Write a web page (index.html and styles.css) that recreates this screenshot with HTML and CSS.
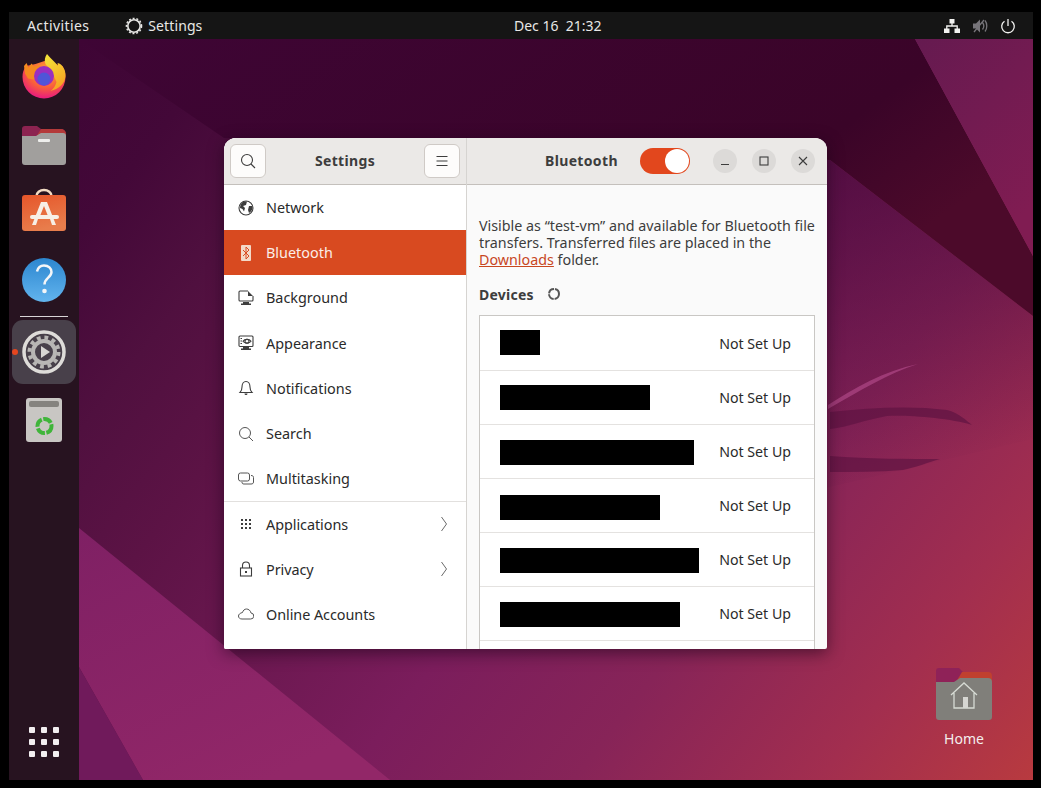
FILE: index.html
```html
<!DOCTYPE html>
<html lang="en">
<head>
<meta charset="utf-8">
<title>Settings - Bluetooth</title>
<link rel="stylesheet" href="styles.css">
</head>
<body>
<div class="screen">
  <header class="topbar">
    <div class="topbar-left">
      <span class="top-item activities">Activities</span>
      <span class="top-item app-menu">
        <svg class="app-gear" viewBox="0 0 18 18"><circle cx="9" cy="9" r="6.2"/><circle class="dash" cx="9" cy="9" r="7.6"/></svg>
        Settings
      </span>
    </div>
    <div class="clock">Dec 16&nbsp;&nbsp;21:32</div>
    <div class="tray">
      <svg class="tray-icon" viewBox="0 0 16 16"><path class="fill-w" d="M5.5 1h5v4.500h-5zM0 10.500h5.500V15H0zM10.500 10.500H16V15h-5.500z"/><path class="line-w" d="M8 5v3M2.800 11V8h10.400v3"/></svg>
      <svg class="tray-icon" viewBox="0 0 16 16"><path class="fill-g" d="M1 5.500h3L8 1.500v13l-4-4H1z"/><path class="line-g" d="M10.500 4.500c1.500 2 1.500 5 0 7M13 2.500c2.400 3 2.400 8 0 11M2 14L12 2"/></svg>
      <svg class="tray-icon" viewBox="0 0 16 16"><path class="line-w" d="M8 1v7M4.500 3.200a6.300 6.300 0 1 0 7 0"/></svg>
    </div>
  </header>

  <div class="workspace">
    <nav class="dock">
      <div class="slot">
        <svg class="dock-icon" viewBox="0 0 48 48">
          <defs>
            <radialGradient id="ffBody" cx="0.55" cy="0.3" r="0.8"><stop offset="0" stop-color="#ffb52e"/><stop offset="0.5" stop-color="#f9603a"/><stop offset="0.85" stop-color="#ea1f7a"/><stop offset="1" stop-color="#e01a90"/></radialGradient>
            <linearGradient id="ffFlame" x1="0" y1="0" x2="0.4" y2="1"><stop offset="0" stop-color="#f4e73a"/><stop offset="1" stop-color="#f6a623"/></linearGradient>
          </defs>
          <path fill="url(#ffBody)" d="M6 14c-2.500 3.500-3.500 7-3.500 11a21.500 21.500 0 0 0 43 0c0-4-1-7.500-3-11l-18-5-9 3z"/>
          <path fill="url(#ffFlame)" d="M27 2c-2 3-3 6-1.500 10l7 9 4 9c-1 4-3 7-6 9 8-2 14.500-7 15-15 .3-6-3-12-8-13 .5 1 .5 2 .5 3-2.500-4-7-7-11-12z"/>
          <path fill="#f58a1f" d="M4 14l2.500-3 2 4.500 3-4 2.500 3 5-1 3 3-5 5-3 6-6-1-3-5z"/>
          <circle cx="24" cy="24" r="10" fill="#9a2fc0"/>
          <circle cx="24" cy="27" r="6.500" fill="#4f55d8"/>
        </svg>
      </div>
      <div class="slot">
        <svg class="dock-icon" viewBox="0 0 48 48">
          <path fill="#8c2350" d="M2 9a3 3 0 0 1 3-3h12l4 3h20a5 5 0 0 1 5 5v8H2z"/>
          <path fill="#b43a3a" d="M21 9h20a5 5 0 0 1 5 5v3H16z"/>
          <path fill="#a19f9d" d="M2 16h14l5-3h22a3 3 0 0 1 3 3v26a3 3 0 0 1-3 3H5a3 3 0 0 1-3-3z"/>
          <rect x="18" y="19" width="12" height="3" rx="1" fill="#eeeeec"/>
        </svg>
      </div>
      <div class="slot">
        <svg class="dock-icon" viewBox="0 0 48 48">
          <defs><linearGradient id="shopBag" x1="0" y1="0" x2="0.3" y2="1"><stop offset="0" stop-color="#e6562a"/><stop offset="1" stop-color="#e87d4c"/></linearGradient></defs>
          <path fill="none" stroke="#f3dcc4" stroke-width="2.500" d="M16.500 8a7.500 6 0 0 1 15 0"/>
          <rect x="2" y="7" width="44" height="36" rx="3" fill="url(#shopBag)"/>
          <path fill="#f7efe6" d="M21 14h6l9 23h-4l-2-6H18l-2 6h-4zM24 18l-4 10h8z"/>
          <rect x="10" y="27" width="29" height="4" rx="2" fill="#f7efe6"/>
        </svg>
      </div>
      <div class="slot">
        <svg class="dock-icon" viewBox="0 0 48 48">
          <defs><linearGradient id="helpBall" x1="0" y1="0" x2="0" y2="1"><stop offset="0" stop-color="#2c86cf"/><stop offset="1" stop-color="#62b4ee"/></linearGradient></defs>
          <circle cx="24" cy="24" r="22" fill="url(#helpBall)"/>
          <path fill="none" stroke="#f4f6f8" stroke-width="2.500" d="M17 15.500c1-4 3.800-6 7-6 4.500 0 7.500 3 7.500 6.500 0 5.500-7 6-7 12.500"/>
          <circle cx="24.500" cy="35" r="2.300" fill="#f4f6f8"/>
        </svg>
      </div>
      <div class="dock-divider"></div>
      <div class="tile">
        <span class="running-dot"></span>
        <svg class="dock-icon" viewBox="0 0 48 48">
          <circle cx="24" cy="24" r="20" fill="none" stroke="#dedcd9" stroke-width="3.500"/>
          <circle cx="24" cy="24" r="11" fill="none" stroke="#b8b6b4" stroke-width="4"/>
          <circle cx="24" cy="24" r="14.500" fill="none" stroke="#b8b6b4" stroke-width="4" stroke-dasharray="3.800 3.790"/>
          <path fill="#d8d6d3" d="M21 18l9 6-9 6z"/>
        </svg>
      </div>
      <div class="slot">
        <svg class="dock-icon" viewBox="0 0 48 48">
          <rect x="6" y="2" width="36" height="44" rx="3" fill="#c8c6c3"/>
          <rect x="9" y="5" width="30" height="6" rx="2" fill="#85837f"/>
          <circle cx="24.500" cy="30" r="7" fill="none" stroke="#3fb53a" stroke-width="4" stroke-dasharray="9 1.500"/>
        </svg>
      </div>
      <div class="show-apps">
        <i></i><i></i><i></i><i></i><i></i><i></i><i></i><i></i><i></i>
      </div>
    </nav>

    <main class="desktop">
      <svg class="wallpaper" viewBox="0 0 954 741" preserveAspectRatio="none">
        <defs>
          <linearGradient id="wpBase" gradientUnits="userSpaceOnUse" x1="0" y1="0" x2="954" y2="741">
            <stop offset="0" stop-color="#3e0535"/><stop offset="0.1" stop-color="#430838"/><stop offset="0.2" stop-color="#50103f"/><stop offset="0.3" stop-color="#5c1345"/><stop offset="0.55" stop-color="#7b1d5c"/><stop offset="0.7" stop-color="#872458"/><stop offset="0.86" stop-color="#a22e4f"/><stop offset="1" stop-color="#b83a3f"/>
          </linearGradient>
          <linearGradient id="wpBand" x1="0" y1="0" x2="1" y2="0.4"><stop offset="0" stop-color="#3e0535"/><stop offset="0.8" stop-color="#3a0428"/><stop offset="1" stop-color="#4c0a2a"/></linearGradient>
          <linearGradient id="wpFacet" x1="0" y1="0" x2="0.6" y2="1"><stop offset="0" stop-color="#651a50"/><stop offset="1" stop-color="#801c52"/></linearGradient>
          <linearGradient id="wpWedge" x1="0" y1="0" x2="0.6" y2="1"><stop offset="0" stop-color="#7f2064"/><stop offset="1" stop-color="#922768"/></linearGradient>
          <linearGradient id="wpShade" x1="0.2" y1="0" x2="0.5" y2="1"><stop offset="0" stop-color="#3e0535" stop-opacity="0.7"/><stop offset="1" stop-color="#3e0535" stop-opacity="0"/></linearGradient>
        </defs>
        <rect width="954" height="741" fill="url(#wpBase)"/>
        <polygon fill="url(#wpShade)" points="751,121 954,277 954,400 700,460 600,121"/>
        <polygon fill="url(#wpBand)" points="0,0 836,0 954,217 954,277 751,121 145,99"/>
        <polygon fill="url(#wpFacet)" points="836,0 954,0 954,217"/>
        <polygon fill="url(#wpWedge)" points="0,489 311,741 64,741 0,628"/>
        <polygon fill="#701a5b" points="0,628 64,741 0,741"/>
        <path class="wisp-light" d="M749 366C775 349 805 332 839 325 810 334 780 352 749 370z"/>
        <path class="wisp-dark" d="M751 373C790 369 830 366 868 371 880 374 888 382 893 386 870 379 830 376 808 377 785 381 770 388 751 390z"/>
        <path class="wisp-dark" d="M751 417C790 420 830 420 861 420 850 423 835 429 824 431 800 433 775 433 751 433z"/>
      </svg>

      <section class="window">
        <aside class="sidebar">
          <div class="sidebar-head">
            <button class="head-btn" type="button">
              <svg class="sym" viewBox="0 0 16 16"><circle cx="7" cy="7" r="5.500"/><path d="M11 11l4 4"/></svg>
            </button>
            <span class="head-title">Settings</span>
            <button class="head-btn" type="button">
              <svg class="sym" viewBox="0 0 16 16"><path d="M2.500 3.500h11M2.500 8h11M2.500 12.500h11"/></svg>
            </button>
          </div>
          <ul class="nav-list">
            <li class="nav-row">
              <svg class="sym" viewBox="0 0 16 16"><circle cx="8" cy="8" r="7"/><path class="solid" d="M6 1.500C3 3 2 5 2 8l2.500 1 1.500 2.500 1-3.500L5 6l3-1 1-3.500zM11 6l3.500 0c.5 3-1 5.500-3.500 7l-1-3z"/></svg>
              <span>Network</span>
            </li>
            <li class="nav-row active">
              <svg class="sym" viewBox="0 0 16 16"><rect class="bt-bg" x="3" y="0" width="10" height="16" rx="1"/><path class="bt-mark" d="M5 5l6 6-3 3V2l3 3-6 6"/></svg>
              <span>Bluetooth</span>
            </li>
            <li class="nav-row">
              <svg class="sym" viewBox="0 0 16 16"><path d="M10 1H2a1 1 0 0 0-1 1v8a1 1 0 0 0 1 1h12a1 1 0 0 0 1-1V6"/><path class="solid" d="M10 1l5 5h-5zM5 12h6v1.500h2V15H3v-1.500h2z"/></svg>
              <span>Background</span>
            </li>
            <li class="nav-row">
              <svg class="sym" viewBox="0 0 16 16"><rect x="1" y="1" width="14" height="10.500" rx="1"/><circle cx="9" cy="6.200" r="2"/><path d="M5 6.200C6.500 3.800 11.500 3.800 13 6.200 11.500 8.600 6.500 8.600 5 6.200zM2.500 3.500h1.500M2.500 6h1.500M2.500 8.500h1.500"/><path class="solid" d="M5 12h6v1.500h2V15H3v-1.500h2z"/></svg>
              <span>Appearance</span>
            </li>
            <li class="nav-row">
              <svg class="sym" viewBox="0 0 16 16"><path d="M2 12.500h12c-1.500-1.500-2-2.500-2-5.500 0-3-1.500-5.500-4-5.500S4 4 4 7c0 3-.5 4-2 5.500z"/><path class="solid" d="M6.500 13.500h3c0 2-3 2-3 0z"/></svg>
              <span>Notifications</span>
            </li>
            <li class="nav-row">
              <svg class="sym thin" viewBox="0 0 16 16"><circle cx="7" cy="7" r="5.500"/><path d="M11 11l4 4"/></svg>
              <span>Search</span>
            </li>
            <li class="nav-row">
              <svg class="sym thin" viewBox="0 0 16 16"><rect x="0.500" y="2" width="11" height="8" rx="2"/><path d="M13 4.500c1.500 0 2.500.5 2.500 2V11c0 1.500-1 2-2.500 2H6c-1.500 0-2-.5-2-2"/></svg>
              <span>Multitasking</span>
            </li>
            <li class="nav-sep" role="separator"></li>
            <li class="nav-row lower">
              <svg class="sym" viewBox="0 0 16 16"><path class="solid" d="M3 3h2v2H3zM7 3h2v2H7zM11 3h2v2h-2zM3 7h2v2H3zM7 7h2v2H7zM11 7h2v2h-2zM3 11h2v2H3zM7 11h2v2H7zM11 11h2v2h-2z"/></svg>
              <span>Applications</span>
              <svg class="chevron" viewBox="0 0 8 16"><path d="M1.500 1l5 7-5 7"/></svg>
            </li>
            <li class="nav-row lower">
              <svg class="sym" viewBox="0 0 16 16"><path d="M4.500 7V4.500a3.500 3.500 0 0 1 7 0V7"/><rect x="2.500" y="7" width="11" height="8"/><rect class="solid" x="7" y="10" width="2" height="2"/></svg>
              <span>Privacy</span>
              <svg class="chevron" viewBox="0 0 8 16"><path d="M1.500 1l5 7-5 7"/></svg>
            </li>
            <li class="nav-row lower">
              <svg class="sym thin" viewBox="0 0 16 16"><path d="M4 13h8.500a3 3 0 0 0 .5-6C12.500 4.500 10.500 3 8.500 3 6.500 3 5 4.500 4.500 6.500 2 7 .5 8.500.5 10c0 2 1.500 3 3.500 3z"/></svg>
              <span>Online Accounts</span>
            </li>
          </ul>
        </aside>

        <div class="panel">
          <div class="panel-head">
            <span class="head-title bt-title">Bluetooth</span>
            <span class="switch"><span class="knob"></span></span>
            <div class="win-controls">
              <span class="win-btn"><svg class="sym small" viewBox="0 0 12 12"><path d="M2 9.500h8"/></svg></span>
              <span class="win-btn"><svg class="sym small" viewBox="0 0 12 12"><rect x="2" y="2" width="8" height="8"/></svg></span>
              <span class="win-btn"><svg class="sym small" viewBox="0 0 12 12"><path d="M2 2l8 8M10 2l-8 8"/></svg></span>
            </div>
          </div>
          <div class="panel-body">
            <p class="intro">Visible as “test-vm” and available for Bluetooth file transfers. Transferred files are placed in the <a class="link" href="#">Downloads</a> folder.</p>
            <div class="devices-head">
              <span>Devices</span>
              <svg class="spinner" viewBox="0 0 14 14"><circle cx="7" cy="7" r="5"/></svg>
            </div>
            <ul class="device-list">
              <li class="device"><span class="redact r1"></span><span class="status">Not Set Up</span></li>
              <li class="device"><span class="redact r2"></span><span class="status">Not Set Up</span></li>
              <li class="device"><span class="redact r3"></span><span class="status">Not Set Up</span></li>
              <li class="device"><span class="redact r4"></span><span class="status">Not Set Up</span></li>
              <li class="device"><span class="redact r5"></span><span class="status">Not Set Up</span></li>
              <li class="device"><span class="redact r6"></span><span class="status">Not Set Up</span></li>
              <li class="device"></li>
            </ul>
          </div>
        </div>
      </section>

      <div class="home-icon">
        <svg class="home-folder" viewBox="0 0 56 52">
          <path fill="#8f2258" d="M0 3a3 3 0 0 1 3-3h20l5 5h24a4 4 0 0 1 4 4v10H0z"/>
          <path fill="#c0402f" d="M26 4h26a4 4 0 0 1 4 4v6H20z"/>
          <path fill="#807f7a" d="M0 14h18l6-4 h28a4 4 0 0 1 4 4v35a3 3 0 0 1-3 3H3a3 3 0 0 1-3-3z"/>
          <path fill="none" stroke="#d6dbd4" stroke-width="1.300" d="M15 27l13-12 13 12M18 25v15h20V25"/>
          <rect x="27" y="29" width="5" height="11" fill="#d6d6d2"/>
        </svg>
        <span class="home-label">Home</span>
      </div>
    </main>
  </div>
</div>
</body>
</html>
```

FILE: styles.css
```css
* { box-sizing: border-box; }

html, body {
  margin: 0;
  height: 100%;
  background: #000;
  overflow: hidden;
}

body {
  font-family: "Noto Sans", "Open Sans", sans-serif;
  font-size: 14px;
  color: #2e2e2e;
}

ul {
  list-style: none;
  margin: 0;
  padding: 0;
}

.screen {
  width: 1024px;
  height: 768px;
  margin: 12px 0 0 9px;
  display: flex;
  flex-direction: column;
}

/* top bar */
.topbar {
  height: 27px;
  flex: none;
  background: #151515;
  color: #e8e8e6;
  display: grid;
  grid-template-columns: 487px auto 1fr;
  align-items: center;
  padding: 0 17px 0 18px;
}

.topbar-left {
  display: flex;
  align-items: center;
  gap: 36px;
}

.top-item {
  display: flex;
  align-items: center;
  gap: 5px;
}

.activities {
  letter-spacing: 0.4px;
}

.app-menu {
  letter-spacing: 0.1px;
}

.app-gear {
  width: 18px;
  height: 18px;
  fill: none;
  stroke: #e8e8e6;
  stroke-width: 1.600;
}

.app-gear .dash {
  stroke-dasharray: 2 1.800;
  stroke-width: 1.400;
}

.clock {
  text-align: center;
}

.tray {
  display: flex;
  justify-content: flex-end;
  gap: 12px;
}

.tray-icon {
  width: 16px;
  height: 16px;
}

.fill-w { fill: #f2f2f0; }
.fill-g { fill: #77757a; }

.line-w, .line-g {
  fill: none;
  stroke-width: 1.300;
}

.line-w { stroke: #f2f2f0; }
.line-g { stroke: #77757a; }

/* dock */
.workspace {
  flex: 1;
  display: flex;
  min-height: 0;
}

.dock {
  width: 70px;
  flex: none;
  background: #271320;
  display: flex;
  flex-direction: column;
  align-items: center;
  padding-top: 3px;
}

.slot {
  width: 64px;
  height: 68px;
  display: flex;
  align-items: center;
  justify-content: center;
}

.dock-icon {
  width: 48px;
  height: 48px;
}

.dock-divider {
  width: 48px;
  height: 1px;
  margin: 2px 0 3px;
  background: #d8d4d6;
}

.tile {
  width: 64px;
  height: 64px;
  background: #48404a;
  border-radius: 11px;
  display: flex;
  align-items: center;
  justify-content: center;
  position: relative;
  margin-bottom: 2px;
}

.running-dot {
  position: absolute;
  left: 0;
  top: 29px;
  width: 6px;
  height: 6px;
  border-radius: 50%;
  background: #e5461f;
}

.show-apps {
  margin-top: auto;
  margin-bottom: 23px;
  display: grid;
  grid-template-columns: repeat(3, 6px);
  gap: 6px;
}

.show-apps i {
  height: 6px;
  border-radius: 1px;
  background: #f2eef0;
}

/* desktop */
.desktop {
  flex: 1;
  position: relative;
  overflow: hidden;
}

.wallpaper {
  position: absolute;
  inset: 0;
  width: 100%;
  height: 100%;
  display: block;
}

.wisp-light {
  fill: #a8427f;
  opacity: 0.8;
}

.wisp-dark {
  fill: #5c1340;
  opacity: 0.65;
}

/* window */
.window {
  position: absolute;
  left: 145px;
  top: 99px;
  width: 603px;
  height: 511px;
  display: flex;
  background: #fafafa;
  border-radius: 12px 12px 2px 2px;
  overflow: hidden;
  box-shadow: 0 4px 16px rgba(20, 0, 20, 0.55);
}

.sidebar {
  width: 243px;
  flex: none;
  background: #fff;
  border-right: 1px solid #d6d4d1;
  display: flex;
  flex-direction: column;
}

.sidebar-head, .panel-head {
  height: 47px;
  flex: none;
  background: #ebe9e7;
  border-bottom: 1px solid #c4c0bc;
  display: flex;
  align-items: center;
}

.sidebar-head {
  justify-content: space-between;
  padding: 0 6px;
}

.head-btn {
  width: 36px;
  height: 34px;
  padding: 0;
  background: #fdfcfb;
  border: 1px solid #cfcac6;
  border-radius: 6px;
  display: flex;
  align-items: center;
  justify-content: center;
}

.head-title {
  font-weight: 700;
  color: #3d3d3d;
  letter-spacing: 0.35px;
  margin-bottom: 2px;
}

.sym {
  width: 16px;
  height: 16px;
  flex: none;
  fill: none;
  stroke: #3d3d3d;
  stroke-width: 1.100;
}

.sym.thin { stroke: #555; stroke-width: 1; }

.sym .solid {
  fill: #3d3d3d;
  stroke: none;
}

.sym.small {
  width: 12px;
  height: 12px;
}

.nav-list {
  flex: 1;
}

.nav-row {
  height: 45.2px;
  display: flex;
  align-items: center;
  padding: 0 18px 0 14px;
  gap: 12px;
  color: #2a2a2a;
  font-size: 14.4px;
}

.nav-row.lower {
  height: 45px;
  letter-spacing: -0.05px;
}

.nav-row span {
  flex: 1;
}

.nav-row.active {
  background: #d84a20;
  color: #fbeee8;
}

.bt-bg {
  fill: #f3d9c8;
  stroke: none;
}

.bt-mark {
  fill: none;
  stroke: #d84a20;
  stroke-width: 1;
}

.nav-sep {
  height: 1px;
  margin-bottom: -0.6px;
  background: #e2e0de;
}

.chevron {
  width: 8px;
  height: 16px;
  flex: none;
  fill: none;
  stroke: #6a6a6a;
  stroke-width: 1;
}

/* right panel */
.panel {
  flex: 1;
  min-width: 0;
  display: flex;
  flex-direction: column;
}

.panel-head {
  padding: 0 12px 0 78px;
}

.bt-title {
  width: 95px;
}

.switch {
  width: 50px;
  height: 26px;
  border-radius: 13px;
  background: #e2471d;
  display: flex;
  justify-content: flex-end;
  padding: 1px;
}

.knob {
  width: 24px;
  height: 24px;
  border-radius: 50%;
  background: #fff;
}

.win-controls {
  margin-left: auto;
  display: flex;
  gap: 15px;
}

.win-btn {
  width: 24px;
  height: 24px;
  border-radius: 50%;
  background: #dcdad8;
  display: flex;
  align-items: center;
  justify-content: center;
}

.panel-body {
  flex: 1;
  min-height: 0;
  padding: 32px 12px 0;
  overflow: hidden;
}

.intro {
  margin: 0;
  line-height: 17px;
  font-size: 14.3px;
  color: #3d3d3d;
}

.link {
  color: #c8471f;
}

.devices-head {
  display: flex;
  align-items: center;
  gap: 13px;
  height: 20px;
  margin-top: 16px;
  font-weight: 700;
  color: #3d3d3d;
  letter-spacing: 0.25px;
}

.spinner {
  width: 14px;
  height: 14px;
  fill: none;
  stroke: #555;
  stroke-width: 2;
  stroke-dasharray: 7 1;
}

.device-list {
  margin-top: 11px;
  padding-top: 1px;
  background: #fff;
  border: 1px solid #c9c7c4;
  border-bottom: 0;
}

.device {
  height: 54px;
  padding: 0 23px 0 20px;
  border-bottom: 1px solid #e4e2e0;
  display: flex;
  align-items: center;
  justify-content: space-between;
}

.status {
  color: #2a2a2a;
  font-size: 14.2px;
}

.redact {
  height: 25px;
  background: #000;
}

.r1 { width: 40px; margin-top: -3px; }
.r2 { width: 150px; margin-top: -1px; }
.r3 { width: 194px; margin-top: 1px; }
.r4 { width: 160px; margin-top: 3px; }
.r5 { width: 199px; margin-top: 1px; }
.r6 { width: 180px; margin-top: 1px; }

/* home icon */
.home-icon {
  position: absolute;
  left: 847px;
  top: 629px;
  width: 76px;
  display: flex;
  flex-direction: column;
  align-items: center;
  gap: 9px;
  color: #f4eeee;
}

.home-folder {
  width: 56px;
  height: 52px;
}
```
